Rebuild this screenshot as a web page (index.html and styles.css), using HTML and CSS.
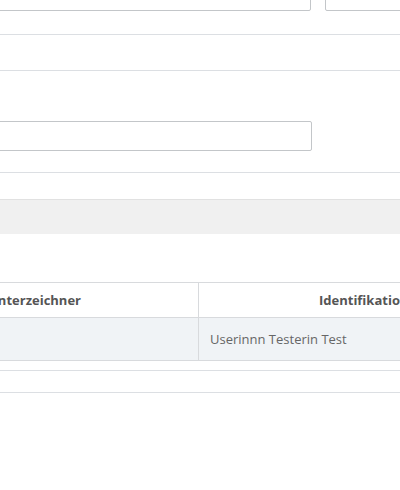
FILE: index.html
```html
<!DOCTYPE html>
<html lang="de">
<head>
<meta charset="utf-8">
<title>Unterzeichner</title>
<link rel="stylesheet" href="styles.css">
</head>
<body>
<div class="page">
  <div class="row-inputs">
    <div class="input input-wide"></div>
    <div class="input input-side"></div>
  </div>
  <div class="divider d1"></div>
  <div class="section-empty"></div>
  <div class="divider"></div>
  <div class="field">
    <div class="input input-field"></div>
  </div>
  <div class="divider"></div>
  <div class="band"></div>
  <table class="signers">
    <thead>
      <tr>
        <th class="col-name">Unterzeichner</th>
        <th class="col-id">Identifikation</th>
      </tr>
    </thead>
    <tbody>
      <tr>
        <td class="col-name"></td>
        <td class="col-id">Userinnn Testerin Test</td>
      </tr>
    </tbody>
  </table>
  <div class="footer-box"></div>
</div>
</body>
</html>
```

FILE: styles.css
```css
html, body {
  margin: 0;
  padding: 0;
  background: #ffffff;
  overflow: hidden;
}

body {
  font-family: "Open Sans", "Liberation Sans", sans-serif;
  font-size: 13px;
  color: #555;
}

.page {
  margin-left: -122px;
  width: 760px;
}

.input {
  box-sizing: border-box;
  border: 1px solid #c3c6c9;
  border-radius: 2px;
  background: #fff;
}

.row-inputs {
  display: flex;
  gap: 14px;
  margin-top: -20px;
  margin-bottom: 23px;
}

.input-wide {
  width: 433px;
  height: 31px;
}

.input-side {
  width: 200px;
  height: 31px;
}

.divider {
  height: 1px;
  background: #dcdfe3;
}

.section-empty {
  height: 35px;
}

.field {
  padding: 50px 0 21px;
}

.input-field {
  width: 434px;
  height: 30px;
}

.band {
  margin-top: 26px;
  height: 35px;
  box-sizing: border-box;
  border-top: 1px solid #e1e1e1;
  background: #f0f0f0;
}

.signers {
  margin-top: 48px;
  border-collapse: collapse;
  width: 760px;
  table-layout: fixed;
}

.signers th,
.signers td {
  border: 1px solid #d8dadd;
  padding: 0;
}

.signers th {
  height: 34px;
  font-weight: 700;
  color: #555;
  line-height: 18px;
  background: #fff;
}

.signers td {
  height: 42px;
  background: #f0f3f6;
  color: #666;
  line-height: 18px;
}

.signers th.col-name {
  width: 202px;
  text-align: right;
  padding-right: 117px;
}

.signers td.col-id {
  padding-left: 11px;
}

.signers th.col-id {
  text-align: left;
  padding-left: 120px;
  white-space: nowrap;
  overflow: hidden;
}

.footer-box {
  margin-top: 9px;
  height: 23px;
  box-sizing: border-box;
  border-top: 1px solid #dcdfe3;
  border-bottom: 1px solid #dcdfe3;
}
```
